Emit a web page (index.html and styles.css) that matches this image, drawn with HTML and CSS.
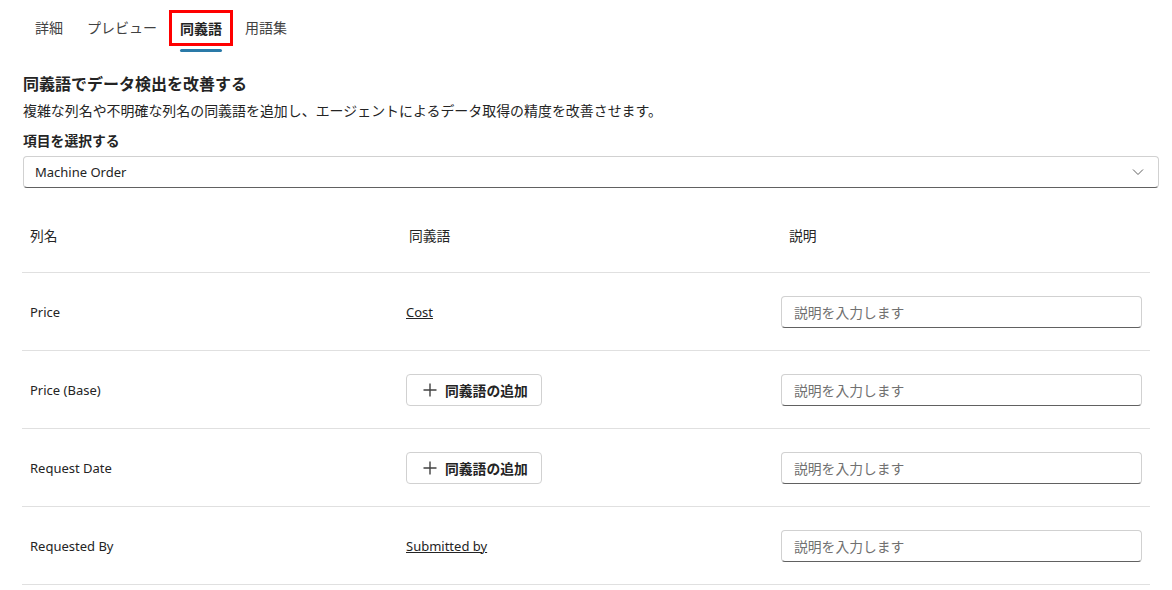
FILE: index.html
```html
<!DOCTYPE html>
<html lang="ja">
<head>
    <meta charset="UTF-8">
    <title>同義語</title>
    <link rel="stylesheet" href="styles.css">
</head>
<body>
    <div class="page">
        <nav class="tabs">
            <span class="tab">詳細</span>
            <span class="tab">プレビュー</span>
            <span class="tab active"><span class="tab-label">同義語</span></span>
            <span class="tab">用語集</span>
        </nav>

        <h2 class="heading">同義語でデータ検出を改善する</h2>
        <p class="desc jp">複雑な列名や不明確な列名の同義語を追加し、エージェントによるデータ取得の精度を改善させます。</p>

        <div class="field-label jp">項目を選択する</div>
        <div class="select">
            <span>Machine Order</span>
            <svg class="chevron" width="12" height="12" viewBox="0 0 12 12"><path d="M1 3.5 L6 8.5 L11 3.5" fill="none" stroke="#616161" stroke-width="1"/></svg>
        </div>

        <div class="grid">
            <div class="row head jp">
                <div class="cell">列名</div>
                <div class="cell">同義語</div>
                <div class="cell">説明</div>
            </div>
            <div class="row">
                <div class="cell">Price</div>
                <div class="cell"><a class="syn">Cost</a></div>
                <div class="cell"><div class="input jp">説明を入力します</div></div>
            </div>
            <div class="row">
                <div class="cell">Price (Base)</div>
                <div class="cell"><button class="add-btn jp"><svg width="16" height="16" viewBox="0 0 16 16"><path d="M8 1.5v13M1.5 8h13" stroke="#424242" stroke-width="1.4"/></svg>同義語の追加</button></div>
                <div class="cell"><div class="input jp">説明を入力します</div></div>
            </div>
            <div class="row">
                <div class="cell">Request Date</div>
                <div class="cell"><button class="add-btn jp"><svg width="16" height="16" viewBox="0 0 16 16"><path d="M8 1.5v13M1.5 8h13" stroke="#424242" stroke-width="1.4"/></svg>同義語の追加</button></div>
                <div class="cell"><div class="input jp">説明を入力します</div></div>
            </div>
            <div class="row">
                <div class="cell">Requested By</div>
                <div class="cell"><a class="syn">Submitted by</a></div>
                <div class="cell"><div class="input jp">説明を入力します</div></div>
            </div>
        </div>
    </div>
</body>
</html>
```

FILE: styles.css
```css
body {
    margin: 0;
    background: #fff;
    color: #242424;
    font-family: "Segoe UI", "Noto Sans", "Noto Sans CJK JP", sans-serif;
    font-size: 13px;
}
/* japanese text sits a touch larger than the latin labels */
.jp {
    font-size: 13.8px;
}
.desc.jp {
    font-size: 13.95px;
}
.page {
    padding: 10px 13px 0 23px;
}
.tabs {
    display: flex;
    align-items: center;
    height: 36px;
}
.tab {
    padding: 0 12px;
    font-size: 14px;
    color: #424242;
    line-height: 36px;
}
.tab.active {
    position: relative;
    box-sizing: border-box;
    height: 36px;
    border: 3px solid #f00;
    padding: 1px 8px 0;
    line-height: 30px;
    font-weight: bold;
    color: #242424;
}
.tab.active .tab-label::after {
    content: "";
    position: absolute;
    left: 8px;
    right: 8px;
    bottom: -9px;
    height: 3px;
    border-radius: 2px;
    background: #2a7aa8;
}
.heading {
    margin: 27px 0 0;
    font-size: 16px;
    font-weight: bold;
    line-height: 22px;
}
.desc {
    margin: 7px 0 0;
    line-height: 18px;
}
.field-label {
    margin-top: 12px;
    font-weight: bold;
    line-height: 18px;
}
.select {
    margin-top: 6px;
    height: 32px;
    box-sizing: border-box;
    border: 1px solid #d1d1d1;
    border-bottom-color: #616161;
    border-radius: 4px;
    display: flex;
    align-items: center;
    justify-content: space-between;
    padding: 0 14px 0 11px;
}
.grid {
    margin-top: 10px;
    margin-right: 9px;
    margin-left: -1px;
}
.row {
    display: grid;
    grid-template-columns: 379px 380px 1fr;
    align-items: center;
    height: 78px;
    border-bottom: 1px solid #e0e0e0;
    padding-left: 8px;
    padding-right: 8px;
    box-sizing: border-box;
}
.row.head {
    height: 75px;
}
.syn {
    color: #242424;
    text-decoration: underline;
    margin-left: -3px;
}
.add-btn {
    display: inline-flex;
    align-items: center;
    gap: 7px;
    height: 32px;
    width: 136px;
    box-sizing: border-box;
    padding: 0 12px 0 15px;
    background: #fff;
    border: 1px solid #d1d1d1;
    border-radius: 4px;
    font-family: inherit;
    font-weight: bold;
    color: #242424;
    margin-left: -3px;
}
.input {
    height: 32px;
    box-sizing: border-box;
    border: 1px solid #d1d1d1;
    border-bottom-color: #616161;
    border-radius: 4px;
    padding: 0 12px;
    display: flex;
    align-items: center;
    color: #707070;
    margin-left: -8px;
}
```
